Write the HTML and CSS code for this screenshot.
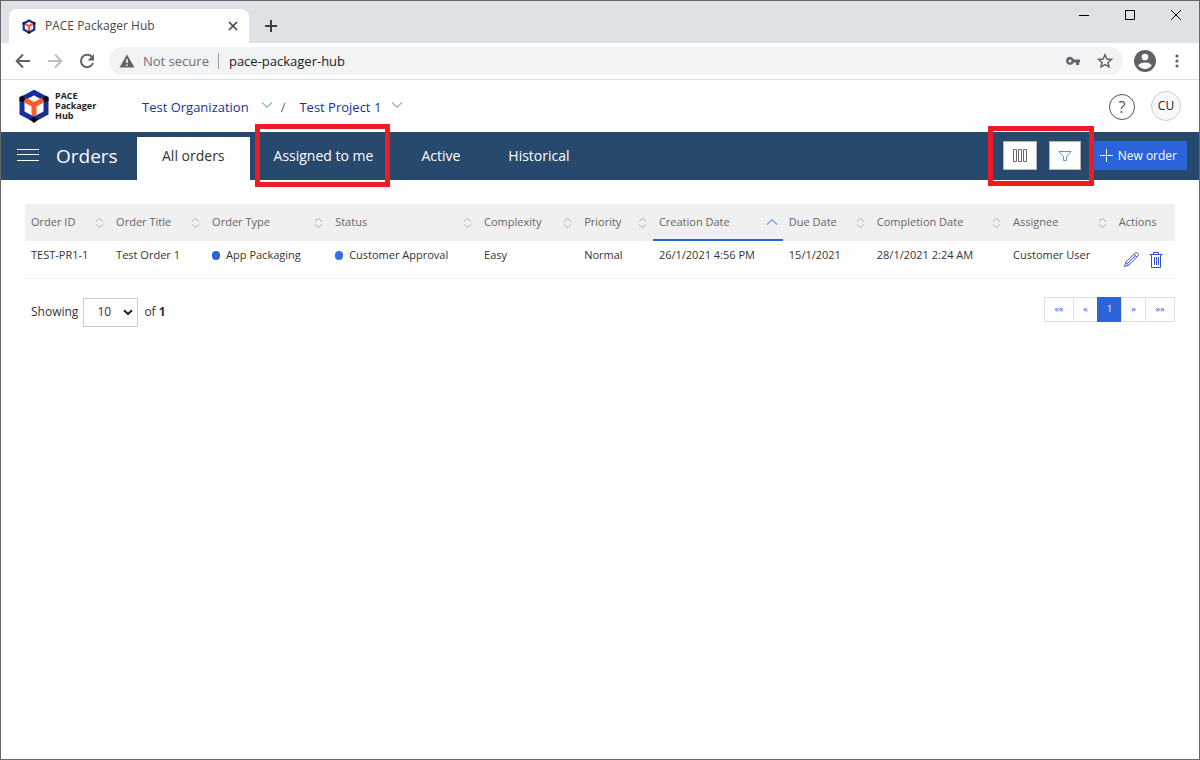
FILE: index.html
```html
<!DOCTYPE html>
<html lang="en">
<head>
<meta charset="utf-8">
<title>PACE Packager Hub</title>
<link rel="stylesheet" href="styles.css">
</head>
<body>
<svg class="defs" aria-hidden="true">
  <symbol id="cube" viewBox="0 0 30 34">
    <path d="M15 3.500 27 10v14L15 30.500 3 24V10z" fill="none" stroke="#162d9c" stroke-width="5"/>
    <path d="M6 11 15 16l9-5M15 16v11" fill="none" stroke="#ff5a2b" stroke-width="5"/>
    <path d="M0.500 8 4 6.500 6 10.500 4 13 0.500 12zM29.500 8 26 6.500 24 10.500 26 13l3.500-1zM11 30.500l4-3 4 3-4 3.500z" fill="#080808"/>
  </symbol>
  <symbol id="sort" viewBox="0 0 10 12"><path d="M1 4.500 5 .8l4 3.700M1 7.500l4 3.700 4-3.700" fill="none" stroke="#a8a8a8"/></symbol>
  <symbol id="chev" viewBox="0 0 12 8"><path d="M1 1.500 6 6.300l5-4.800" fill="none" stroke="currentColor"/></symbol>
</svg>
<div class="window">
  <header class="tabstrip">
    <div class="browser-tab">
      <svg class="favicon"><use href="#cube"/></svg>
      <span class="tab-title">PACE Packager Hub</span>
      <button class="plain" aria-label="Close tab"><svg width="10" height="10" viewBox="0 0 10 10"><path d="M1 1l8 8M9 1 1 9" stroke="#3c4043" stroke-width="1.600"/></svg></button>
    </div>
    <button class="plain new-tab" aria-label="New tab"><svg width="14" height="14" viewBox="0 0 14 14"><path d="M7 1v12M1 7h12" stroke="#3c4043" stroke-width="2"/></svg></button>
    <div class="window-buttons">
      <button class="plain" aria-label="Minimize"><svg width="12" height="12" viewBox="0 0 12 12"><path d="M1 6.500h10" stroke="#000"/></svg></button>
      <button class="plain" aria-label="Maximize"><svg width="12" height="12" viewBox="0 0 12 12"><path d="M1.500 1.500h9v9h-9z" fill="none" stroke="#000"/></svg></button>
      <button class="plain" aria-label="Close"><svg width="12" height="12" viewBox="0 0 12 12"><path d="M1 1l10 10M11 1 1 11" stroke="#000"/></svg></button>
    </div>
  </header>
  <div class="toolbar">
    <button class="plain" aria-label="Back"><svg width="16" height="16" viewBox="0 0 16 16"><path d="M15 8H2M8 1.500 1.700 8 8 14.500" fill="none" stroke="#5f6368" stroke-width="2"/></svg></button>
    <button class="plain" aria-label="Forward"><svg width="16" height="16" viewBox="0 0 16 16"><path d="M1 8h13M8 1.500 14.300 8 8 14.500" fill="none" stroke="#bcbec1" stroke-width="2"/></svg></button>
    <button class="plain" aria-label="Reload"><svg width="16" height="16" viewBox="0 0 16 16"><path d="M13.500 4.800A6.200 6.200 0 1 0 14 10" fill="none" stroke="#5f6368" stroke-width="2"/><path d="M15 1v6.500H8.500z" fill="#5f6368"/></svg></button>
    <div class="omnibox">
      <svg width="16" height="14" viewBox="0 0 16 14"><path d="M8 .5 15.500 13.500H.5z" fill="#5f6368"/><path d="M8 5v4M8 10.500V12" stroke="#fff" stroke-width="1.500"/></svg>
      <span class="not-secure">Not secure</span>
      <input class="address" aria-label="Address" value="pace-packager-hub">
      <svg width="16" height="10" viewBox="0 0 16 10"><path fill="#5f6368" fill-rule="evenodd" d="M5 .8a4 4 0 1 0 3.700 5.700H11V9h3V6.500h1v-3H8.700A4 4 0 0 0 5 .8zM5 3.500a1.500 1.500 0 1 1 0 3 1.500 1.500 0 0 1 0-3z"/></svg>
      <svg class="star" width="16" height="16" viewBox="0 0 16 16"><path d="M8 1.800 9.900 6l4.500.4-3.400 3 1 4.400L8 11.500l-4 2.300 1-4.400-3.400-3L6.100 6z" fill="none" stroke="#5f6368" stroke-width="1.500"/></svg>
    </div>
    <button class="plain profile" aria-label="Profile"><svg width="22" height="22" viewBox="0 0 22 22"><circle cx="11" cy="11" r="11" fill="#5f6368"/><circle cx="11" cy="7" r="3.300" fill="#fff"/><path d="M4.300 15.500c1.500-4 12-4 13.400 0-3 4.500-10.400 4.500-13.400 0z" fill="#fff"/></svg></button>
    <button class="plain" aria-label="Menu"><svg width="4" height="14" viewBox="0 0 4 14" fill="#5f6368"><circle cx="2" cy="2" r="1.600"/><circle cx="2" cy="7" r="1.600"/><circle cx="2" cy="12" r="1.600"/></svg></button>
  </div>

  <div class="app-header">
    <a class="brand" href="#"><svg class="logo"><use href="#cube"/></svg><span>PACE<br>Packager<br>Hub</span></a>
    <nav class="crumbs">
      <a href="#">Test Organization</a><svg class="chev teal"><use href="#chev"/></svg>
      <span class="slash">/</span>
      <a href="#">Test Project 1</a><svg class="chev"><use href="#chev"/></svg>
    </nav>
    <button class="help" aria-label="Help">?</button>
    <button class="avatar">CU</button>
  </div>

  <div class="orders-bar">
    <button class="plain burger" aria-label="Navigation"><svg width="22" height="12" viewBox="0 0 22 12"><path d="M0 .5h22M0 5.500h22M0 11.500h22" stroke="#fff"/></svg></button>
    <h1>Orders</h1>
    <nav class="tabs">
      <a class="tab selected" href="#">All orders</a>
      <a class="tab marked" href="#">Assigned to me</a>
      <a class="tab" href="#">Active</a>
      <a class="tab" href="#">Historical</a>
    </nav>
    <div class="tools marked">
      <button class="tool columns" aria-label="Columns"><svg width="16" height="13" viewBox="0 0 16 13"><path d="M1.500 .5h3v12h-3zM6.500 .5h3v12h-3zM11.500 .5h3v12h-3z" fill="none" stroke="#666"/></svg></button>
      <button class="tool" aria-label="Filter"><svg width="14" height="12" viewBox="0 0 14 12"><path d="M1 1.500h12L8.500 6.500v4h-3v-4z" fill="none" stroke="#6c8fc4"/></svg></button>
    </div>
    <button class="new-order"><svg width="13" height="13" viewBox="0 0 13 13"><path d="M6.500 0v13M0 6.500h13" stroke="#fff"/></svg>New order</button>
  </div>

  <main>
    <table>
      <colgroup><col class="c-id"><col class="c-title"><col class="c-type"><col class="c-status"><col class="c-complexity"><col class="c-priority"><col class="c-created"><col class="c-due"><col class="c-completed"><col class="c-assignee"><col></colgroup>
      <thead>
        <tr>
          <th><div>Order ID<svg class="sort"><use href="#sort"/></svg></div></th>
          <th><div>Order Title<svg class="sort"><use href="#sort"/></svg></div></th>
          <th><div>Order Type<svg class="sort"><use href="#sort"/></svg></div></th>
          <th><div>Status<svg class="sort"><use href="#sort"/></svg></div></th>
          <th><div>Complexity<svg class="sort"><use href="#sort"/></svg></div></th>
          <th><div>Priority<svg class="sort"><use href="#sort"/></svg></div></th>
          <th class="sorted"><div>Creation Date<svg class="chev up"><use href="#chev"/></svg></div></th>
          <th><div>Due Date<svg class="sort"><use href="#sort"/></svg></div></th>
          <th><div>Completion Date<svg class="sort"><use href="#sort"/></svg></div></th>
          <th><div>Assignee<svg class="sort"><use href="#sort"/></svg></div></th>
          <th><div>Actions</div></th>
        </tr>
      </thead>
      <tbody>
        <tr>
          <td>TEST-PR1-1</td>
          <td>Test Order 1</td>
          <td><span class="dot type">App Packaging</span></td>
          <td><span class="dot">Customer Approval</span></td>
          <td>Easy</td>
          <td>Normal</td>
          <td>26/1/2021 4:56 PM</td>
          <td>15/1/2021</td>
          <td>28/1/2021 2:24 AM</td>
          <td>Customer User</td>
          <td><div class="actions">
            <button class="plain" aria-label="Edit"><svg width="17" height="17" viewBox="0 0 18 18"><path d="M1.500 16.500 3 12 13 2c1.500-1.500 4.500 1.500 3 3L6 15zM3 12l3 3M11.500 3.500l3 3M4.500 13.500l9-9" fill="none" stroke="#2c4fd0"/></svg></button>
            <button class="plain" aria-label="Delete"><svg width="14" height="18" viewBox="0 0 14 18"><path d="M.5 3.500h13M4.500 3V1.500h5V3M2.500 3.500v13h9v-13M5.500 6v8M7.500 6v8M9.500 6v8" fill="none" stroke="#2c4fd0"/></svg></button>
          </div></td>
        </tr>
      </tbody>
    </table>
    <div class="footer">
      <label for="size">Showing</label>
      <span class="size-box"><select id="size"><option>10</option></select><svg width="10" height="7" viewBox="0 0 10 7"><path d="M1 1.200 5 5l4-3.800" fill="none" stroke="#222" stroke-width="2"/></svg></span>
      <span>of <b>1</b></span>
      <nav class="pager">
        <button class="wide">««</button><button>«</button><button class="current">1</button><button>»</button><button class="wide">»»</button>
      </nav>
    </div>
  </main>
</div>
</body>
</html>
```
FILE: styles.css
```css
* { box-sizing: border-box; }
body {
  margin: 0;
  background: #fff;
  color: #333;
  font: 11px/16px "Open Sans", "Noto Sans", sans-serif;
}
button, select, input { font: inherit; color: inherit; margin: 0; }
button { cursor: pointer; }
a { text-decoration: none; color: inherit; }
svg { display: block; flex: none; }
.defs { position: absolute; width: 0; height: 0; }
.plain { display: flex; padding: 0; border: 0; background: none; }
.window { min-height: 100vh; border: 1px solid #666; }

.tabstrip { display: flex; align-items: flex-end; height: 42px; background: #dee1e6; }
.browser-tab {
  display: flex;
  align-items: center;
  width: 240px;
  height: 34px;
  margin-left: 8px;
  padding: 0 11px 0 13px;
  border-radius: 8px 8px 0 0;
  background: #fff;
  color: #45494d;
}
.favicon { width: 14px; height: 15px; margin-right: 9px; }
.tab-title { flex: 1; font-size: 12px; }
.new-tab { margin: 0 auto 10px 15px; }
.window-buttons { display: flex; gap: 34px; align-self: flex-start; padding: 8px 17px 0 0; }

.toolbar {
  display: flex;
  align-items: center;
  gap: 16px;
  height: 37px;
  padding: 0 20px 0 14px;
  border-bottom: 1px solid #dadce0;
}
.omnibox {
  flex: 1;
  display: flex;
  align-items: center;
  height: 28px;
  margin: 0 -5px 0 -2px;
  padding: 0 10px;
  border-radius: 14px;
  background: #f1f3f4;
  font-size: 13px;
}
.not-secure { margin-left: 8px; padding-right: 9px; border-right: 1px solid #9aa0a6; color: #6b6f73; }
.address { flex: 1; min-width: 0; padding: 0 0 0 10px; border: 0; background: none; color: #202124; outline: 0; }
.star { margin-left: 16px; }
.profile { margin-right: 3px; }

.app-header { display: flex; align-items: center; height: 52px; padding: 0 18px; }
.brand { display: flex; align-items: center; gap: 6px; width: 123px; color: #222; font-size: 9px; font-weight: 700; line-height: 10px; }
.logo { width: 30px; height: 34px; }
.crumbs { flex: 1; display: flex; align-items: center; padding-top: 2px; color: #1c2f9e; font-size: 13px; line-height: 20px; }
.chev { width: 12px; height: 8px; margin: 0 0 4px 10px; color: #777; }
.chev.teal { margin-left: 12px; color: #3d8f9e; }
.slash { margin: 0 14px 0 8px; color: #666; }
.help, .avatar { border-radius: 50%; padding: 0; }
.help { width: 26px; height: 26px; margin: 2px 16px 0 0; border: 1px solid #555; background: #fff; color: #555; font-size: 16px; line-height: 24px; }
.avatar { width: 30px; height: 30px; border: 1px solid #ccc; background: #f7f8fa; color: #222; font-size: 12px; }

.orders-bar { display: flex; align-items: center; height: 48px; padding: 0 12px 0 16px; background: #27496d; color: #fff; }
.burger { margin: 0 17px 3px 0; }
h1 { width: 81px; margin: 0; font-size: 19px; font-weight: 400; line-height: 28px; }
.tabs { display: flex; align-self: flex-end; height: 43px; font-size: 14px; line-height: 38px; }
.tab { padding: 0 24px; white-space: nowrap; }
.tab.selected { padding: 0 25px; background: #fff; color: #333; }
.marked { position: relative; }
.marked::after {
  content: "";
  position: absolute;
  inset: -13px 7px -7px 5px;
  border: 5px solid #ed1c24;
  pointer-events: none;
}
.tools { display: flex; gap: 12px; margin: 0 0 1px auto; }
.tools::after { inset: -15px -13px -16px -15px; }
.tool { display: flex; align-items: center; justify-content: center; width: 32px; height: 29px; padding: 0; border: 1px solid #b5b5b5; background: #fff; }
.columns { width: 34px; }
.new-order { display: flex; align-items: center; gap: 5px; height: 29px; margin: 0 0 1px 13px; padding: 0 10px 0 6px; border: 0; background: #2b63d9; font-size: 12px; white-space: nowrap; }

main { padding: 24px; }
table { width: 100%; table-layout: fixed; border-collapse: collapse; white-space: nowrap; }
.c-id { width: 7.4%; }
.c-title { width: 8.35%; }
.c-type { width: 10.7%; }
.c-status { width: 12.95%; }
.c-complexity { width: 8.7%; }
.c-priority { width: 6.5%; }
.c-created { width: 11.3%; }
.c-due { width: 7.65%; }
.c-completed { width: 11.85%; }
.c-assignee { width: 9.2%; }
th { height: 37px; padding: 0 6px 1px; background: #f0f0f0; color: #666; font-weight: 500; text-align: left; }
th div { display: flex; align-items: center; justify-content: space-between; }
.sort { width: 9px; height: 12px; margin-top: 2px; }
.sorted { box-shadow: inset 0 -2px #2b63d9; }
.up { margin: 0 -1px 0 0; color: #2b63d9; transform: rotate(180deg); }
td { height: 37px; padding: 6px 6px 0; border-bottom: 1px solid #eee; vertical-align: top; }
.dot { display: flex; align-items: center; gap: 6px; }
.dot::before { content: ""; width: 8px; height: 9px; border-radius: 4px; background: #2f6fed; }
.type::before { background: #2b63d9; }
.actions { display: flex; gap: 9px; padding: 4px 0 0 4px; }

.footer { display: flex; align-items: center; margin-top: 18px; padding-left: 6px; font-size: 12px; }
.size-box { position: relative; margin: 0 6px 0 5px; }
select { width: 55px; height: 29px; padding: 0 0 0 13px; border: 1px solid #ccc; border-radius: 0; background: #fff; appearance: none; }
.size-box svg { position: absolute; right: 5px; top: 11px; pointer-events: none; }
.pager { display: flex; margin: 0 0 6px auto; }
.pager button { width: 25px; height: 25px; margin-left: -1px; padding: 0; border: 1px solid #dee2e6; background: #fff; color: #3b4ed0; font-size: 9px; line-height: 20px; }
.pager .wide { width: 30px; }
.pager .current { border-color: #2b63d9; background: #2b63d9; color: #fff; }
```
